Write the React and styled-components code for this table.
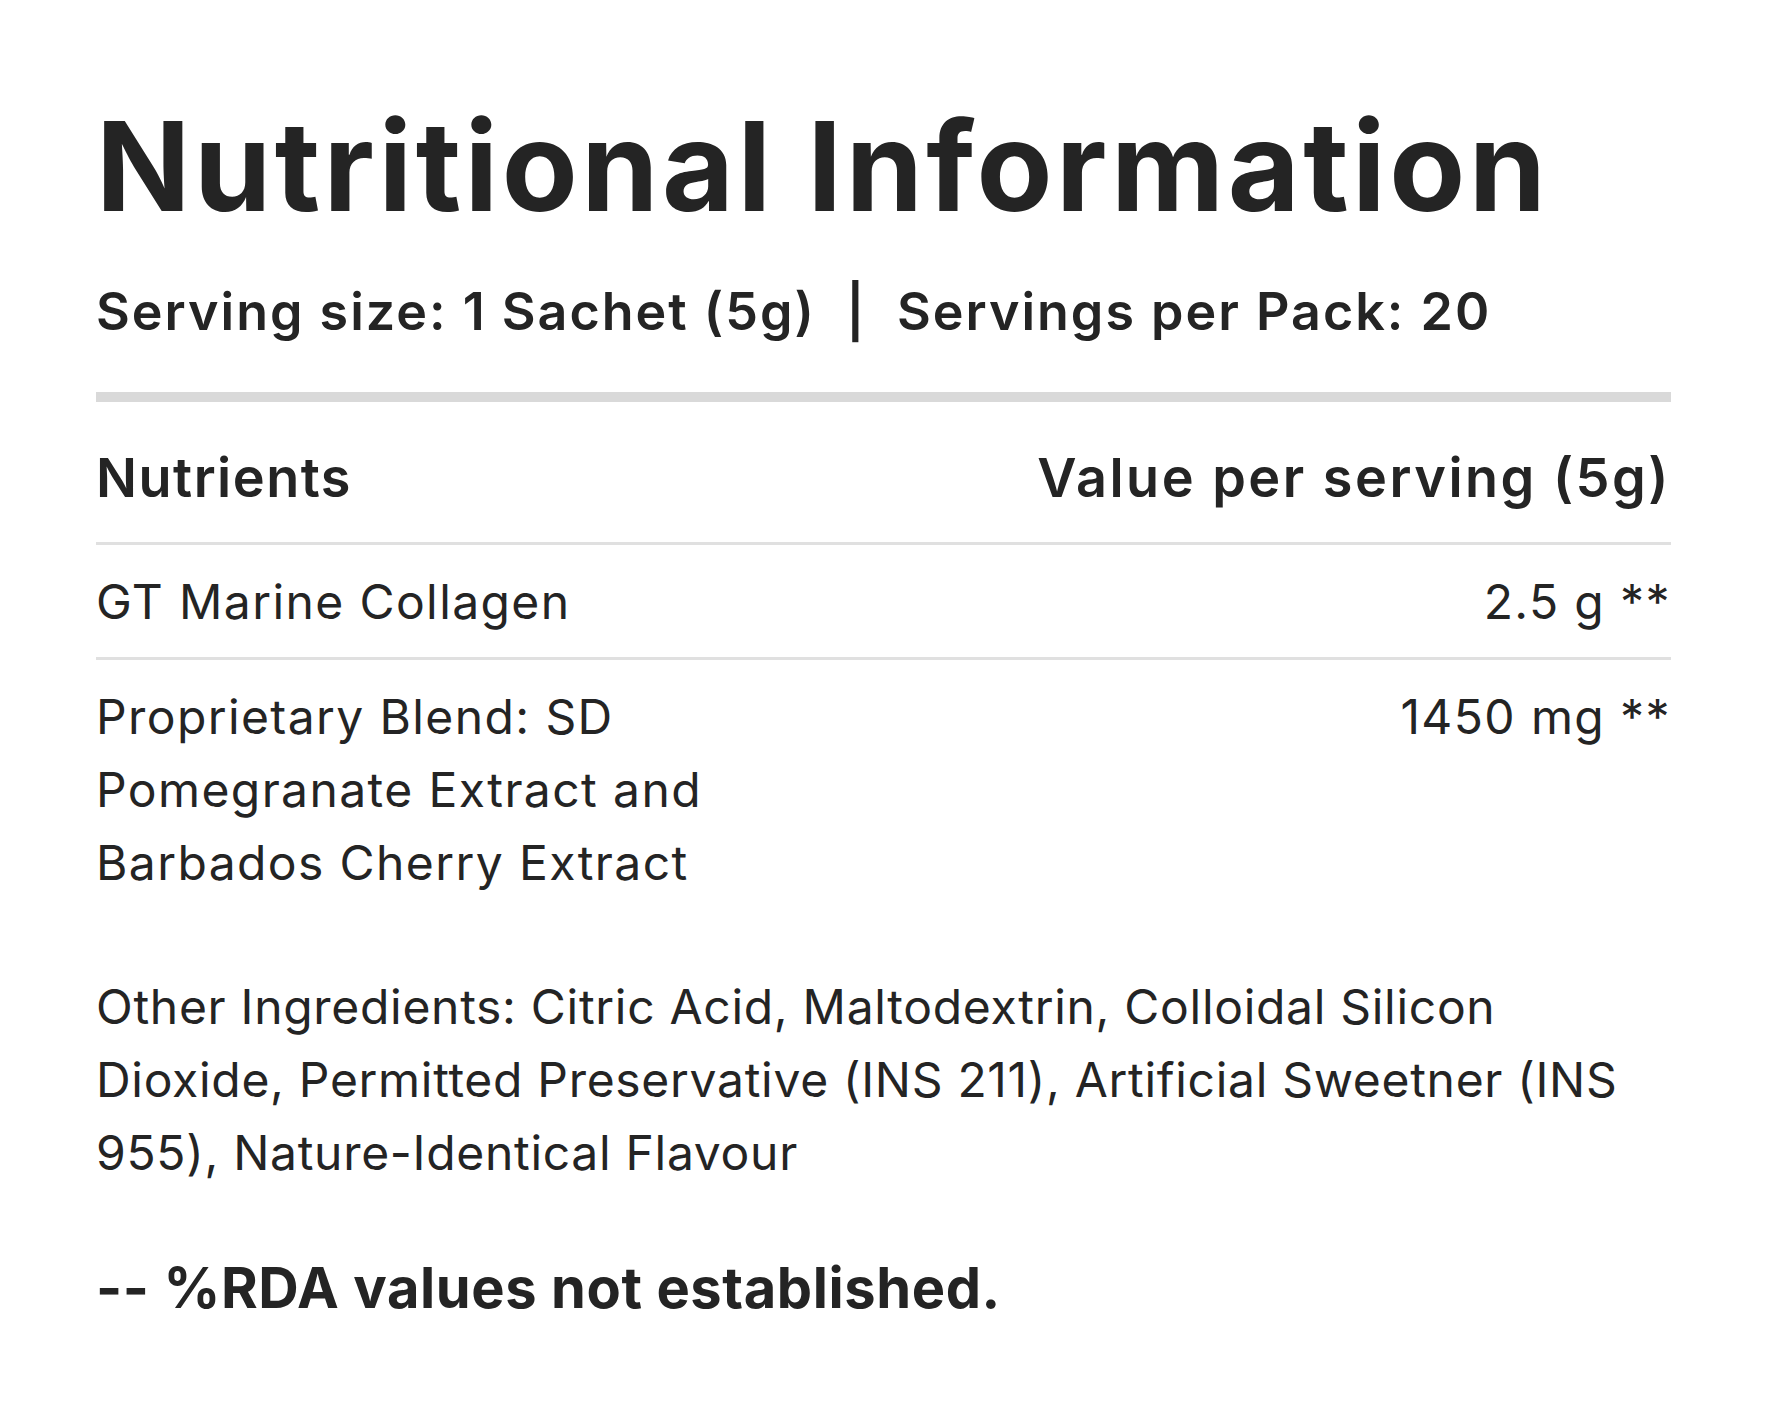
import React from 'react';
import styled, { createGlobalStyle } from 'styled-components';

const GlobalStyle = createGlobalStyle`
  html, body {
    margin: 0;
    padding: 0;
    background: #ffffff;
  }
  body {
    font-family: Inter, "Open Sans", sans-serif;
    color: #242424;
  }
`;

const nutrients = [
  { name: 'GT Marine Collagen', value: '2.5 g **' },
  {
    name: 'Proprietary Blend: SD Pomegranate Extract and Barbados Cherry Extract',
    value: '1450 mg **',
    last: true,
  },
];

function App() {
  return (
    <>
      <GlobalStyle />
      <Page>
        <Title>Nutritional Information</Title>
        <Serving>Serving size: 1 Sachet (5g)&nbsp; | &nbsp;Servings per Pack: 20</Serving>
        <Divider />
        <Table>
          <HeadRow>
            <HeadCell>Nutrients</HeadCell>
            <HeadCell $right>Value per serving (5g)</HeadCell>
          </HeadRow>
          {nutrients.map((n) => (
            <Row key={n.name} $last={n.last}>
              <Cell>{n.name}</Cell>
              <Cell $right>{n.value}</Cell>
            </Row>
          ))}
        </Table>
        <Ingredients>
          Other Ingredients: Citric Acid, Maltodextrin, Colloidal Silicon Dioxide, Permitted
          Preservative (INS 211), Artificial Sweetner (INS 955), Nature-Identical Flavour
        </Ingredients>
        <Note>-- %RDA values not established.</Note>
      </Page>
    </>
  );
}

const Page = styled.div`
  box-sizing: border-box;
  width: 1770px;
  height: 1406px;
  padding: 104px 99px 0 96px;
`;

const Title = styled.h1`
  margin: 0;
  font-size: 124px;
  line-height: 124px;
  font-weight: 700;
  letter-spacing: 3.5px;
  white-space: nowrap;
`;

const Serving = styled.div`
  margin-top: 54px;
  font-size: 52px;
  line-height: 60px;
  font-weight: 600;
  letter-spacing: 2px;
  white-space: nowrap;
`;

const Divider = styled.div`
  margin-top: 50px;
  height: 10px;
  background: #d9d9d9;
`;

const Table = styled.div`
  display: flex;
  flex-direction: column;
`;

const HeadRow = styled.div`
  display: grid;
  grid-template-columns: 1fr 1fr;
  padding: 45px 0 33px;
  border-bottom: 3px solid #e0e0e0;
`;

const HeadCell = styled.div`
  font-size: 54px;
  line-height: 62px;
  font-weight: 600;
  letter-spacing: ${(p) => (p.$right ? '2.5px' : '1.5px')};
  white-space: nowrap;
  text-align: ${(p) => (p.$right ? 'right' : 'left')};
`;

const Row = styled.div`
  display: grid;
  grid-template-columns: 1fr 1fr;
  padding: 20px 0 ${(p) => (p.$last ? '0' : '19px')};
  border-bottom: ${(p) => (p.$last ? 'none' : '3px solid #e0e0e0')};
`;

const Cell = styled.div`
  font-size: 48px;
  line-height: 73px;
  font-weight: 400;
  letter-spacing: 1.4px;
  text-align: ${(p) => (p.$right ? 'right' : 'left')};
`;

const Ingredients = styled.p`
  margin: 71px 0 0;
  font-size: 48px;
  line-height: 73px;
  font-weight: 400;
  letter-spacing: 0.7px;
`;

const Note = styled.p`
  margin: 67px 0 0;
  font-size: 56px;
  line-height: 64px;
  font-weight: 700;
  letter-spacing: 0.6px;
`;

export default App;
